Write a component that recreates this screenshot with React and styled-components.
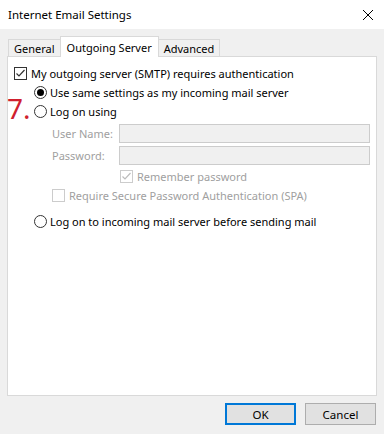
import React from 'react';
import styled, { createGlobalStyle } from 'styled-components';

const GlobalStyle = createGlobalStyle`
  html, body {
    margin: 0;
    padding: 0;
    background: #f0f0f0;
  }
  body {
    font-family: 'Noto Sans', 'Segoe UI', sans-serif;
    font-size: 11px;
    color: #000;
  }
`;

const Dialog = styled.div`
  width: 384px;
  height: 434px;
  display: flex;
  flex-direction: column;
  background: #f0f0f0;
  overflow: hidden;
`;

const TitleBar = styled.div`
  height: 29px;
  background: #fff;
  display: flex;
  align-items: center;
  justify-content: space-between;
  padding: 0 10px 0 8px;
  font-size: 11.5px;
`;

const Body = styled.div`
  flex: 1;
  display: flex;
  flex-direction: column;
  padding: 8px 7px 0 7px;
`;

const TabStrip = styled.div`
  display: flex;
  align-items: flex-end;
  height: 20px;
  padding-left: 1px;
`;

const Tab = styled.div`
  height: ${p => (p.$active ? '21px' : '18px')};
  padding: 0 ${p => (p.$active ? '6px' : '5px')};
  margin: 0 ${p => (p.$active ? '-1px' : '0')};
  display: flex;
  align-items: center;
  background: ${p => (p.$active ? '#fff' : '#f0f0f0')};
  border: 1px solid #d9d9d9;
  border-bottom: ${p => (p.$active ? 'none' : '1px solid #d9d9d9')};
  position: relative;
  z-index: ${p => (p.$active ? 2 : 1)};
  box-sizing: border-box;
  font-size: 11px;
`;

const Panel = styled.div`
  width: 370px;
  height: 340px;
  box-sizing: border-box;
  background: #fff;
  border: 1px solid #d9d9d9;
  margin-top: -1px;
  padding: 7px 0 0 6px;
  display: flex;
  flex-direction: column;
`;

const Row = styled.div`
  display: flex;
  align-items: center;
  height: 19px;
  padding-left: ${p => p.$indent || 0}px;
  margin-top: ${p => p.$gap || 0}px;
  color: ${p => (p.$disabled ? '#a0a0a0' : '#000')};
  position: relative;
`;

const Box = styled.span`
  width: 13px;
  height: 13px;
  box-sizing: border-box;
  border: 1px solid ${p => (p.$disabled ? '#cccccc' : '#333')};
  background: #fff;
  margin-right: 4px;
  display: inline-flex;
  align-items: center;
  justify-content: center;
`;

const Radio = styled.span`
  width: 13px;
  height: 13px;
  box-sizing: border-box;
  border: 1px solid #333;
  border-radius: 50%;
  margin-right: 3px;
  display: inline-flex;
  align-items: center;
  justify-content: center;
  &::after {
    content: '';
    width: 7px;
    height: 7px;
    border-radius: 50%;
    background: ${p => (p.$checked ? '#000' : 'transparent')};
  }
`;

const Step = styled.span`
  position: absolute;
  left: -7px;
  top: -8px;
  font-size: 28px;
  line-height: 28px;
  color: #d0202e;
  font-family: 'Noto Sans', sans-serif;
`;

const FieldRow = styled.div`
  display: flex;
  align-items: center;
  padding-left: 38px;
  margin-top: ${p => p.$gap || 0}px;
  height: 19px;
`;

const FieldLabel = styled.span`
  width: 67px;
  color: #a0a0a0;
`;

const Input = styled.div`
  width: 251px;
  height: 19px;
  box-sizing: border-box;
  background: #f0f0f0;
  border: 1px solid #cccccc;
`;

const Footer = styled.div`
  display: flex;
  justify-content: flex-end;
  gap: 9px;
  padding: 7px 1px 0 0;
`;

const Button = styled.button`
  width: 71px;
  height: 22px;
  box-sizing: border-box;
  background: #e1e1e1;
  border: ${p => (p.$default ? '2px solid #0078d7' : '1px solid #adadad')};
  font-family: inherit;
  font-size: 11.5px;
  color: #000;
  padding: 0;
`;

const Check = ({ color }) => (
  <svg width="11" height="11" viewBox="0 0 11 11">
    <path d="M1.5 5.5 L4 8 L9.5 2" fill="none" stroke={color} strokeWidth="1.2" />
  </svg>
);

export default function App() {
  return (
    <Dialog>
      <GlobalStyle />
      <TitleBar>
        <span>Internet Email Settings</span>
        <svg width="12" height="12" viewBox="0 0 12 12">
          <path d="M1 1 L11 11 M11 1 L1 11" stroke="#000" strokeWidth="1" />
        </svg>
      </TitleBar>
      <Body>
        <TabStrip>
          <Tab>General</Tab>
          <Tab $active>Outgoing Server</Tab>
          <Tab>Advanced</Tab>
        </TabStrip>
        <Panel>
          <Row>
            <Box><Check color="#333" /></Box>
            My outgoing server (SMTP) requires authentication
          </Row>
          <Row $indent={20}>
            <Radio $checked />
            Use same settings as my incoming mail server
          </Row>
          <Row $indent={20}>
            <Step>7.</Step>
            <Radio />
            Log on using
          </Row>
          <FieldRow $gap={3}>
            <FieldLabel>User Name:</FieldLabel>
            <Input />
          </FieldRow>
          <FieldRow $gap={3}>
            <FieldLabel>Password:</FieldLabel>
            <Input />
          </FieldRow>
          <Row $indent={106} $gap={2} $disabled>
            <Box $disabled><Check color="#bcbcbc" /></Box>
            Remember password
          </Row>
          <Row $indent={38} $disabled>
            <Box $disabled />
            Require Secure Password Authentication (SPA)
          </Row>
          <Row $indent={20} $gap={7}>
            <Radio />
            Log on to incoming mail server before sending mail
          </Row>
        </Panel>
        <Footer>
          <Button $default>OK</Button>
          <Button>Cancel</Button>
        </Footer>
      </Body>
    </Dialog>
  );
}
